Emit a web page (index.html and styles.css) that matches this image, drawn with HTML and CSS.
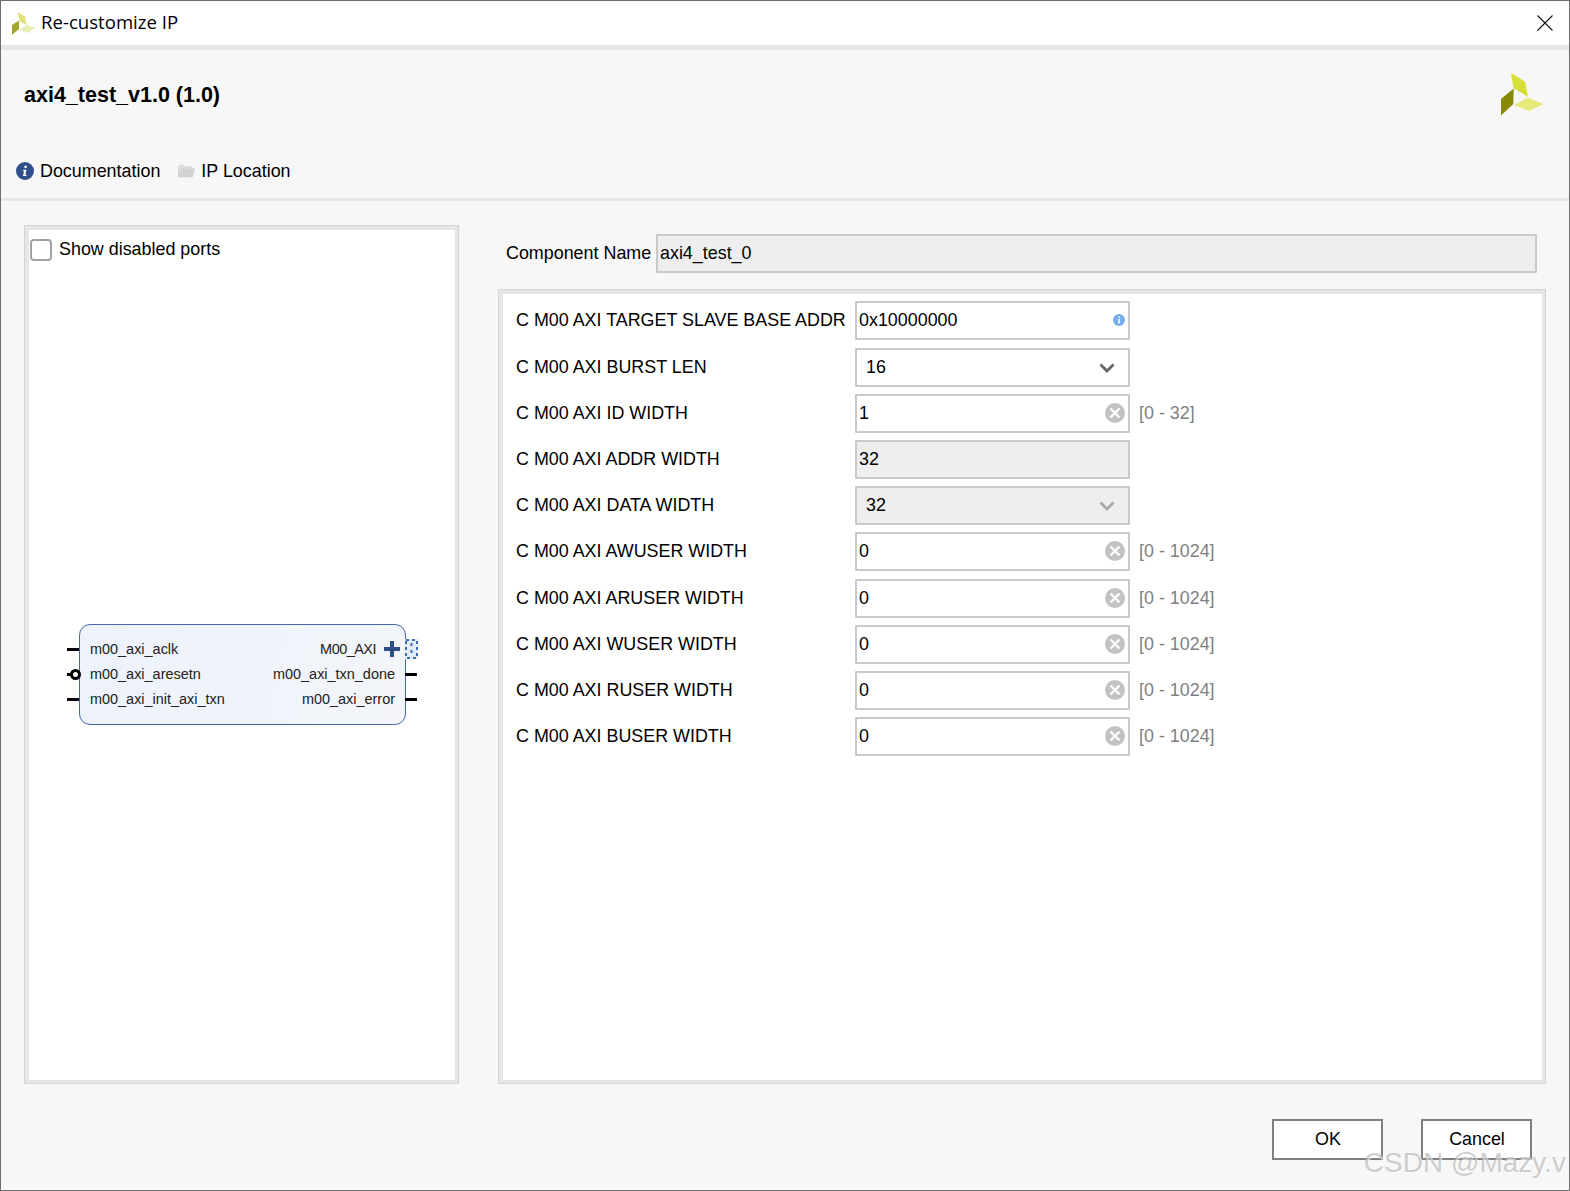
FILE: index.html
```html
<!DOCTYPE html>
<html lang="en">
<head>
<meta charset="utf-8">
<title>Re-customize IP</title>
<link rel="stylesheet" href="styles.css">
</head>
<body>
<div class="window">
  <header class="titlebar">
    <svg class="app-logo" viewBox="0 0 26 24" width="26" height="24"><polygon points="5.5,0 13,4.5 14.7,13 7.5,9" fill="#dfe37a"/><polygon points="0,13 7,8.5 7,17 0,23" fill="#a3a62c"/><polygon points="7.5,17.5 14.7,13 23.5,16 15,21" fill="#e9ecb0"/></svg>
    <span class="window-title">Re-customize IP</span>
    <svg class="close" viewBox="0 0 16 16" width="16" height="16"><path d="M.5.5l15 15M15.5.5l-15 15" stroke="#111" stroke-width="1.1" fill="none"/></svg>
  </header>

  <section class="header">
    <div class="header-top">
      <h1 class="ip-name">axi4_test_v1.0 (1.0)</h1>
      <svg class="brand-logo" viewBox="0 0 44 44" width="44" height="44"><polygon points="12,0 26,8.5 29,24 14.5,15" fill="#d6df35"/><polygon points="2,26 14.7,15.5 14.3,31 2,42.6" fill="#888a05"/><polygon points="15,32 28.7,24.5 44.7,31 30.3,38" fill="#e6ea7a"/></svg>
    </div>
    <nav class="links">
      <span class="link">
        <svg viewBox="0 0 18 18" width="18" height="18"><circle cx="9" cy="9" r="9" fill="#2f4f8a"/><path d="M9.6 3.6a1.3 1.3 0 1 1-.01 0zM7.2 7.8h3.2l-1 5h1.1v1.2H7l1-5H7z" fill="#fff"/></svg>
        Documentation
      </span>
      <span class="link">
        <svg viewBox="0 0 18 16" width="17" height="16"><path d="M1 3V1.5h5l1.5 1.5H15v2H4L1 8z" fill="#dcdcdc"/><path d="M0 14.5V3h1v7l2.500-4.800H18l-2.500 9.500z" fill="#d2d2d2"/></svg>
        IP Location
      </span>
    </nav>
  </section>

  <main class="content">
    <section class="symbol-panel">
      <label class="show-ports"><span class="checkbox"></span>Show disabled ports</label>
      <div class="block">
        <div class="port-row">
          <span class="stub stub-left"></span>
          <span>m00_axi_aclk</span>
          <span class="bus-name">M00_AXI</span>
          <svg class="plus" viewBox="0 0 16 16" width="16" height="16"><path d="M8 0v16M0 8h16" stroke="#2f4e86" stroke-width="4"/></svg>
          <svg class="bus-dots" viewBox="0 0 13 20" width="13" height="20"><rect width="13" height="20" fill="#e2edf8"/><rect x="1" y="1" width="11" height="18" fill="none" stroke="#3b6fb5" stroke-width="2" stroke-dasharray="3 3"/><path d="M6.500 4v12" stroke="#3b6fb5" stroke-width="2" stroke-dasharray="3 4"/></svg>
        </div>
        <div class="port-row">
          <span class="stub stub-left"></span><span class="invert"></span>
          <span>m00_axi_aresetn</span>
          <span>m00_axi_txn_done</span>
          <span class="stub stub-right"></span>
        </div>
        <div class="port-row">
          <span class="stub stub-left"></span>
          <span>m00_axi_init_axi_txn</span>
          <span>m00_axi_error</span>
          <span class="stub stub-right"></span>
        </div>
      </div>
    </section>

    <section class="config">
      <div class="component-row">
        <span class="component-label">Component Name</span>
        <div class="field disabled component-field">axi4_test_0</div>
      </div>
      <div class="params">
        <span class="param">C M00 AXI TARGET SLAVE BASE ADDR</span>
        <div class="field">0x10000000<svg class="info" viewBox="0 0 12 12" width="12" height="12"><circle cx="6" cy="6" r="6" fill="#78ade9"/><path d="M5.200 2.400h1.600v1.500H5.200zM5.200 5h1.600v4.600H5.200z" fill="#fff"/></svg></div>
        <span></span>

        <span class="param">C M00 AXI BURST LEN</span>
        <div class="field select">16<svg class="chevron" viewBox="0 0 16 10" width="16" height="10"><path d="M1.500 1.500L8 8l6.500-6.500" stroke="#666" stroke-width="2.800" fill="none"/></svg></div>
        <span></span>

        <span class="param">C M00 AXI ID WIDTH</span>
        <div class="field">1<svg class="clear" viewBox="0 0 20 20" width="20" height="20"><circle cx="10" cy="10" r="10" fill="#c2c2c2"/><path d="M5.500 5.500l9 9M14.500 5.500l-9 9" stroke="#fff" stroke-width="2.400"/></svg></div>
        <span class="hint">[0 - 32]</span>

        <span class="param">C M00 AXI ADDR WIDTH</span>
        <div class="field disabled">32</div>
        <span></span>

        <span class="param">C M00 AXI DATA WIDTH</span>
        <div class="field select disabled">32<svg class="chevron" viewBox="0 0 16 10" width="16" height="10"><path d="M1.500 1.500L8 8l6.500-6.500" stroke="#a8a8a8" stroke-width="2.800" fill="none"/></svg></div>
        <span></span>

        <span class="param">C M00 AXI AWUSER WIDTH</span>
        <div class="field">0<svg class="clear" viewBox="0 0 20 20" width="20" height="20"><circle cx="10" cy="10" r="10" fill="#c2c2c2"/><path d="M5.500 5.500l9 9M14.500 5.500l-9 9" stroke="#fff" stroke-width="2.400"/></svg></div>
        <span class="hint">[0 - 1024]</span>

        <span class="param">C M00 AXI ARUSER WIDTH</span>
        <div class="field">0<svg class="clear" viewBox="0 0 20 20" width="20" height="20"><circle cx="10" cy="10" r="10" fill="#c2c2c2"/><path d="M5.500 5.500l9 9M14.500 5.500l-9 9" stroke="#fff" stroke-width="2.400"/></svg></div>
        <span class="hint">[0 - 1024]</span>

        <span class="param">C M00 AXI WUSER WIDTH</span>
        <div class="field">0<svg class="clear" viewBox="0 0 20 20" width="20" height="20"><circle cx="10" cy="10" r="10" fill="#c2c2c2"/><path d="M5.500 5.500l9 9M14.500 5.500l-9 9" stroke="#fff" stroke-width="2.400"/></svg></div>
        <span class="hint">[0 - 1024]</span>

        <span class="param">C M00 AXI RUSER WIDTH</span>
        <div class="field">0<svg class="clear" viewBox="0 0 20 20" width="20" height="20"><circle cx="10" cy="10" r="10" fill="#c2c2c2"/><path d="M5.500 5.500l9 9M14.500 5.500l-9 9" stroke="#fff" stroke-width="2.400"/></svg></div>
        <span class="hint">[0 - 1024]</span>

        <span class="param">C M00 AXI BUSER WIDTH</span>
        <div class="field">0<svg class="clear" viewBox="0 0 20 20" width="20" height="20"><circle cx="10" cy="10" r="10" fill="#c2c2c2"/><path d="M5.500 5.500l9 9M14.500 5.500l-9 9" stroke="#fff" stroke-width="2.400"/></svg></div>
        <span class="hint">[0 - 1024]</span>
      </div>
    </section>
  </main>

  <footer class="footer">
    <button class="btn">OK</button>
    <button class="btn">Cancel</button>
  </footer>

  <div class="watermark">CSDN @Mazy.v</div>
  <div class="edge-marks"></div>
</div>
</body>
</html>
```

FILE: styles.css
```css
* { box-sizing: border-box; }

html, body {
  margin: 0;
  padding: 0;
  overflow: hidden;
}

body {
  width: 1570px;
  height: 1191px;
  font-family: "Liberation Sans", Arial, sans-serif;
  font-size: 17.900px;
  color: #000;
}

.window {
  position: relative;
  display: flex;
  flex-direction: column;
  width: 1570px;
  height: 1191px;
  background: #f7f7f7;
  border: 1px solid #6e6e6e;
  overflow: hidden;
}

.titlebar {
  flex: none;
  display: flex;
  align-items: center;
  height: 49px;
  padding: 0 16px 0 11px;
  background: #fff;
  border-bottom: 5px solid #e6e6e6;
}

.app-logo { margin-right: 3px; margin-top: 1px; }

.window-title {
  font-family: "Open Sans", "Noto Sans", sans-serif;
  font-size: 18.600px;
  line-height: 24px;
  flex: 1;
  margin-top: -3px;
}

.header {
  flex: none;
  height: 151px;
  padding: 0 26px 0 15px;
  border-bottom: 3px solid #e8e8e8;
}

.header-top {
  display: flex;
  justify-content: space-between;
  height: 103px;
  padding-left: 8px;
}

.ip-name {
  margin: 29.500px 0 0;
  font-size: 21.500px;
  font-weight: 700;
  line-height: 30px;
}

.brand-logo { margin-top: 23px; }

.links {
  display: flex;
  gap: 18px;
  align-items: center;
  height: 36px;
}

.link {
  display: flex;
  align-items: center;
  gap: 6px;
}

.content {
  flex: none;
  display: flex;
  gap: 40px;
  height: 882px;
  padding: 25px 24px 0 24px;
}

.symbol-panel {
  position: relative;
  flex: none;
  width: 433px;
  height: 857px;
  background: #fff;
  border: solid #e6e6e6;
  border-width: 4px 3px 3px 4px;
  box-shadow: 0 0 0 1px #d4d4d4;
}

.show-ports {
  display: flex;
  align-items: center;
  gap: 7px;
  height: 21px;
  margin: 9px 0 0 1px;
}

.checkbox {
  width: 22px;
  height: 22px;
  background: #fff;
  border: 2px solid #a2a2a2;
  border-radius: 4px;
}

.block {
  position: absolute;
  left: 50px;
  top: 394px;
  width: 327px;
  height: 101px;
  padding: 12px 10px 0;
  font-size: 14.450px;
  color: #222;
  background: linear-gradient(100deg, #edf2fb, #f3f5f9);
  border: 1.500px solid #4468a8;
  border-radius: 11px;
}

.port-row {
  position: relative;
  display: flex;
  justify-content: space-between;
  height: 25px;
  line-height: 25px;
}

.stub {
  position: absolute;
  top: 11px;
  width: 12px;
  height: 3px;
  background: #000;
}

.stub-left { left: -23px; }
.stub-right { right: -22px; }

.invert {
  position: absolute;
  left: -20px;
  top: 7px;
  width: 11px;
  height: 11px;
  background: #fff;
  border: 3px solid #000;
  border-radius: 50%;
}

.bus-name {
  margin-left: auto;
  margin-right: 19px;
  letter-spacing: -.5px;
}

.plus {
  position: absolute;
  right: -5px;
  top: 4px;
}

.bus-dots {
  position: absolute;
  right: -23px;
  top: 2px;
}

.config {
  flex: 1;
  display: flex;
  flex-direction: column;
}

.component-row {
  display: flex;
  align-items: center;
  height: 39px;
  margin-top: 8px;
  padding-left: 8px;
  padding-right: 8px;
}

.component-label { width: 150px; flex: none; }

.component-field { flex: 1; }

.field {
  position: relative;
  display: flex;
  align-items: center;
  height: 39px;
  padding-left: 2px;
  background: #fff;
  border: 2px solid #c9c9c9;
  border-radius: 1px;
}

.field.disabled { background: #eeeeee; }
.field.select { padding-left: 9px; }

.info { position: absolute; right: 3px; top: 11px; }
.clear { position: absolute; right: 3px; top: 7px; }
.chevron { position: absolute; right: 13px; top: 13px; }

.params {
  flex: 1;
  display: grid;
  grid-template-columns: 339px 275px 1fr;
  grid-auto-rows: 39px;
  row-gap: 7.200px;
  align-items: center;
  align-content: start;
  height: 794px;
  margin-top: 17px;
  margin-left: 1px;
  padding: 7.400px 0 0 13px;
  background: #fff;
  border: solid #e6e6e6;
  border-width: 4px 3px 3px 4px;
  box-shadow: 0 0 0 1px #d4d4d4;
}

.param { white-space: nowrap; }

.hint {
  margin-left: 9px;
  color: #7f7f7f;
}

.footer {
  flex: none;
  display: flex;
  justify-content: flex-end;
  gap: 38px;
  padding: 36px 37px 0 0;
}

.btn {
  width: 111px;
  height: 41px;
  font: inherit;
  background: #fff;
  border: 2px solid #808080;
  padding: 0 0 0 1px;
}

.watermark {
  position: absolute;
  right: 3px;
  top: 1145px;
  font-size: 28px;
  line-height: 34px;
  white-space: nowrap;
  color: rgba(165, 165, 165, .55);
  text-shadow: 1px 1px 1px rgba(255, 255, 255, .7);
}

.edge-marks {
  position: absolute;
  left: 670px;
  bottom: -1px;
  width: 400px;
  height: 1px;
  background: repeating-linear-gradient(90deg, #1d2c55 0 4px, transparent 4px 13px);
}
```
